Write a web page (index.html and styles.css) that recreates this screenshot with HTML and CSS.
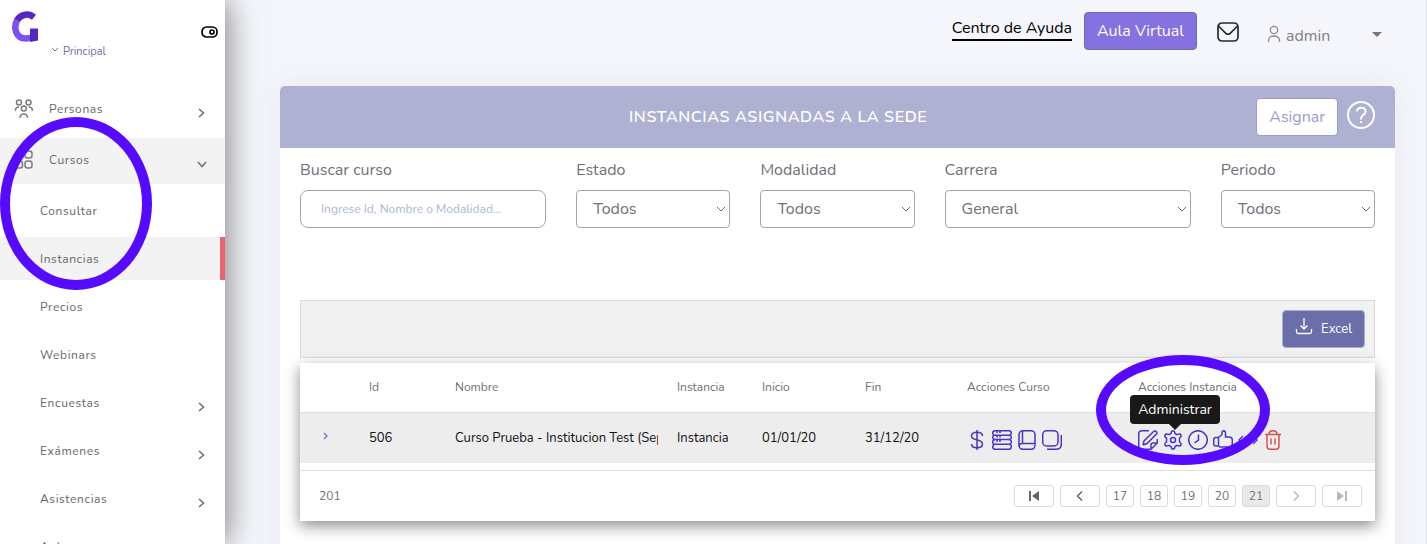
FILE: index.html
```html
<!DOCTYPE html>
<html lang="es">
  <head>
    <meta charset="UTF-8" />
    <meta name="viewport" content="width=device-width, initial-scale=1.0" />
    <title>Instancias asignadas a la sede</title>
    <link rel="stylesheet" href="styles.css">
  </head>
  <body>
    <div class="layout">
      <aside class="sidebar">
        <div class="brand">
          <svg class="logo" width="27" height="32" viewBox="0 0 27 32" fill="none" stroke-width="6.500">
            <path d="M5.500 8.500C1 16 3.500 27.500 14 27.500C17 27.500 19 27 21 25.500" stroke="#7a52f4" />
            <path d="M22 6.200C17 2.200 9 2.500 5.300 9" stroke="#5527c0" />
            <path d="M18 17.500H26V29.500L18 31Z" fill="#5527c0" stroke="none" />
          </svg>
          <a class="sede" href="#">
            <svg width="8" height="6" viewBox="0 0 8 6" fill="none" stroke="#6b6ea8"><path d="M1 1L4 4L7 1" /></svg>
            Principal
          </a>
          <button class="toggle" type="button" aria-label="Contraer menú">
            <svg width="18" height="12" viewBox="0 0 18 12" fill="none" stroke="#000" stroke-width="1.700">
              <rect x="1" y="1" width="15" height="10" rx="4.500" />
              <circle cx="11" cy="6" r="2" />
            </svg>
          </button>
        </div>

        <nav class="menu">
          <a class="menu-item" href="#">
            <svg class="menu-icon" width="20" height="20" viewBox="0 0 20 20" fill="none" stroke="#7d7d7d" stroke-width="1.500">
              <circle cx="5" cy="3.500" r="2.500" /><circle cx="14.500" cy="3.500" r="2.500" /><circle cx="9.800" cy="9.500" r="2.500" />
              <path d="M1.500 12V11C1.500 9 3 8 5 8M14.500 8C17 8 18.300 9 18.300 11V12M6 19C6 13.500 13.500 13.500 13.500 19" />
            </svg>
            <span>Personas</span>
            <svg class="arrow" width="7" height="10" viewBox="0 0 7 10"><path d="M1 1L5.500 5L1 9" /></svg>
          </a>
          <a class="menu-item open" href="#">
            <svg class="menu-icon" width="20" height="20" viewBox="0 0 20 20" fill="none" stroke="#7d7d7d" stroke-width="1.500">
              <rect x="1.500" y="1" width="7" height="7" rx="2.500" /><rect x="11" y="1" width="7" height="7" rx="2.500" />
              <rect x="1.500" y="11" width="7" height="7" rx="2.500" /><rect x="11" y="11" width="7" height="7" rx="2.500" />
            </svg>
            <span>Cursos</span>
            <svg class="arrow" width="10" height="7" viewBox="0 0 10 7"><path d="M1 1L5 5.500L9 1" /></svg>
          </a>
          <div class="submenu">
            <a class="sub-item" href="#"><span>Consultar</span></a>
            <a class="sub-item active" href="#"><span>Instancias</span></a>
            <a class="sub-item" href="#"><span>Precios</span></a>
            <a class="sub-item" href="#"><span>Webinars</span></a>
            <a class="sub-item" href="#"><span>Encuestas</span><svg class="arrow" width="7" height="10" viewBox="0 0 7 10"><path d="M1 1L5.500 5L1 9" /></svg></a>
            <a class="sub-item" href="#"><span>Exámenes</span><svg class="arrow" width="7" height="10" viewBox="0 0 7 10"><path d="M1 1L5.500 5L1 9" /></svg></a>
            <a class="sub-item" href="#"><span>Asistencias</span><svg class="arrow" width="7" height="10" viewBox="0 0 7 10"><path d="M1 1L5.500 5L1 9" /></svg></a>
            <a class="sub-item" href="#"><span>Aulas</span></a>
          </div>
        </nav>
      </aside>

      <main class="main">
        <header class="topbar">
          <a class="help-link" href="#">Centro de Ayuda</a>
          <button class="btn btn-aula" type="button">Aula Virtual</button>
          <a class="mail" href="#" aria-label="Mensajes">
            <svg width="22" height="20" viewBox="0 0 22 20" fill="none" stroke="#252b33" stroke-width="1.700">
              <rect x="1" y="1" width="20" height="18" rx="4" />
              <path d="M1.500 4L9 11.500Q11 13 13 11.500L20.500 4" />
            </svg>
          </a>
          <button class="user" type="button">
            <svg width="14" height="18" viewBox="0 0 14 18" fill="none" stroke="#8a8a8a" stroke-width="1.300">
              <circle cx="7" cy="5" r="3.700" /><path d="M1.500 17V15.500C1.500 9.500 12.500 9.500 12.500 15.500V17" />
            </svg>
            <span>admin</span>
            <i class="caret"></i>
          </button>
        </header>

        <section class="card">
          <div class="card-header">
            <h1>INSTANCIAS ASIGNADAS A LA SEDE</h1>
            <button class="btn btn-asignar" type="button">Asignar</button>
            <button class="help" type="button" aria-label="Ayuda">
              <svg width="28" height="28" viewBox="0 0 28 28" fill="none" stroke="#fff" stroke-width="2">
                <circle cx="14" cy="14" r="13" />
                <path d="M10 10.500C10 5.500 18.500 5.500 18.500 10.500C18.500 14 14 13.500 14 17.500V18.500M14 20V22" />
              </svg>
            </button>
          </div>

          <form class="filters">
            <div class="field wide">
              <label for="buscar">Buscar curso</label>
              <input id="buscar" type="text" placeholder="Ingrese Id, Nombre o Modalidad..." />
            </div>
            <div class="field">
              <label for="estado">Estado</label>
              <div class="select"><select id="estado"><option>Todos</option></select><svg width="10" height="6" viewBox="0 0 10 6"><path d="M1 1L5 5L9 1" /></svg></div>
            </div>
            <div class="field">
              <label for="modalidad">Modalidad</label>
              <div class="select"><select id="modalidad"><option>Todos</option></select><svg width="10" height="6" viewBox="0 0 10 6"><path d="M1 1L5 5L9 1" /></svg></div>
            </div>
            <div class="field wide">
              <label for="carrera">Carrera</label>
              <div class="select"><select id="carrera"><option>General</option></select><svg width="10" height="6" viewBox="0 0 10 6"><path d="M1 1L5 5L9 1" /></svg></div>
            </div>
            <div class="field">
              <label for="periodo">Periodo</label>
              <div class="select"><select id="periodo"><option>Todos</option></select><svg width="10" height="6" viewBox="0 0 10 6"><path d="M1 1L5 5L9 1" /></svg></div>
            </div>
          </form>

          <div class="toolbar">
            <button class="btn btn-excel" type="button">
              <svg width="18" height="18" viewBox="0 0 18 18" fill="none" stroke="#fff" stroke-width="1.300">
                <path d="M9 1V12M5.500 8.500L9 12L12.500 8.500M1.500 12V15Q1.500 16.500 3 16.500H15Q16.500 16.500 16.500 15V12" />
              </svg>
              Excel
            </button>
          </div>

          <div class="grid">
            <table>
              <colgroup>
                <col class="c-expand" /><col class="c-id" /><col class="c-nombre" /><col class="c-instancia" />
                <col class="c-inicio" /><col class="c-fin" /><col class="c-curso" /><col />
              </colgroup>
              <thead>
                <tr>
                  <th></th><th>Id</th><th>Nombre</th><th>Instancia</th><th>Inicio</th><th>Fin</th><th>Acciones Curso</th><th>Acciones Instancia</th>
                </tr>
              </thead>
              <tbody>
                <tr>
                  <td class="expand">
                    <button class="icon" type="button" aria-label="Expandir"><svg width="5" height="8" viewBox="0 0 5 8" fill="none" stroke="#6b6ec8" stroke-width="1.200"><path d="M1 1L4 4L1 7" /></svg></button>
                  </td>
                  <td>506</td>
                  <td><div class="clip">Curso Prueba - Institucion Test (Sep</div></td>
                  <td>Instancia</td>
                  <td>01/01/20</td>
                  <td>31/12/20</td>
                  <td>
                    <div class="actions">
                      <button class="icon" type="button" aria-label="Precios"><svg viewBox="0 0 20 20"><path d="M10 0V20M15.500 6C15.500 1 4.500 1 4.500 6C4.500 11 15.500 8.500 15.500 14C15.500 19 4.500 19 4.500 14" /></svg></button>
                      <button class="icon" type="button" aria-label="Contenidos"><svg viewBox="0 0 20 20"><path d="M3 5.300Q0.700 5.300 0.700 3Q0.700 0.700 3 0.700H17Q19.300 0.700 19.300 3Q19.300 5.300 17 5.300ZM3 5.300Q0.700 5.300 0.700 7.300Q0.700 9.600 3 9.600H17Q19.300 9.600 19.300 7.300Q19.300 5.300 17 5.300M3 9.600Q0.700 9.600 0.700 12Q0.700 14.300 3 14.300H17Q19.300 14.300 19.300 12Q19.300 9.600 17 9.600M3 14.300Q0.700 14.300 0.700 16.800Q0.700 19.300 3 19.300H17Q19.300 19.300 19.300 16.800Q19.300 14.300 17 14.300" /><path d="M5 1V3M8 1V3M5 5.500V7.500M8 5.500V7.500M5 10V12M8 10V12" /></svg></button>
                      <button class="icon" type="button" aria-label="Libro"><svg viewBox="0 0 20 20"><rect x="2" y="0.700" width="16" height="18.600" rx="4" /><path d="M5.500 1V13.500M2 16.500C2 14.500 3 13.500 5 13.500H18" /></svg></button>
                      <button class="icon" type="button" aria-label="Duplicar"><svg viewBox="0 0 20 20"><rect x="0.700" y="0.700" width="15.300" height="15.300" rx="4" /><path d="M19.300 5V14Q19.300 19.300 14 19.300H5" /></svg></button>
                    </div>
                  </td>
                  <td>
                    <div class="actions">
                      <button class="icon" type="button" aria-label="Editar"><svg viewBox="0 0 20 20"><path d="M11 0.800H4Q0.700 0.800 0.700 4V16Q0.700 19.300 4 19.300H13L19.300 13V9M13 19.300V15Q13 13 15 13H19.300M5 15L6 11L15.500 1.500Q18.500 0 19 3.500L9 13.500L5 15" /></svg></button>
                      <span class="tip-anchor">
                        <button class="icon" type="button" aria-describedby="tip" aria-label="Administrar"><svg viewBox="0 0 20 20"><path d="M8 3.500Q8.500 0.800 10 0.800Q11.500 0.800 12 3.500L14 4.600Q17 3.300 18 5Q18.700 6.500 16.500 8V12Q18.700 13.500 18 15Q17 16.700 14 15.400L12 16.500Q11.500 19.200 10 19.200Q8.500 19.200 8 16.500L6 15.400Q3 16.700 2 15Q1.300 13.500 3.500 12V8Q1.300 6.500 2 5Q3 3.300 6 4.600Z" /><circle cx="10" cy="10" r="2.500" /></svg></button>
                        <span class="tooltip" id="tip" role="tooltip">Administrar</span>
                      </span>
                      <button class="icon" type="button" aria-label="Horarios"><svg viewBox="0 0 20 20"><circle cx="10" cy="10" r="9.300" /><path d="M10.500 4.500V10L6.500 13" /></svg></button>
                      <button class="icon" type="button" aria-label="Aprobar"><svg viewBox="0 0 20 20"><path d="M5.500 16V7.500H2.700Q0.700 7.500 0.700 9.500V14Q0.700 16 2.700 16H5.500L7 17H16Q19.300 17 19.300 14V10Q19.300 7 16 7H12.500V3Q12.500 0.700 10.700 0.700Q9 0.700 9 3V4.500L5.500 7.500" /></svg></button>
                      <button class="icon" type="button" aria-label="Sincronizar"><svg viewBox="0 0 20 20"><path d="M5 6L1 10L5 14M15 6L19 10L15 14M4 10H16" /></svg></button>
                      <button class="icon danger" type="button" aria-label="Eliminar"><svg viewBox="0 0 20 20"><path d="M2 4.500H18M6 4.500Q6 0.700 10 0.700Q14 0.700 14 4.500M4 4.500V16Q4 19.300 7 19.300H13Q16 19.300 16 16V4.500M8 8.500V14.500M12 8.500V14.500" /></svg></button>
                    </div>
                  </td>
                </tr>
              </tbody>
            </table>
            <div class="grid-footer">
              <span>201</span>
              <div class="pager">
                <button class="nav" type="button" aria-label="Primera"><svg width="10" height="10" viewBox="0 0 10 10"><path d="M0 0H2V10H0ZM10 0V10L3 5Z" /></svg></button>
                <button class="nav" type="button" aria-label="Anterior"><svg width="10" height="10" viewBox="0 0 10 10"><path class="line" d="M7 0.500L2.500 5L7 9.500" /></svg></button>
                <button type="button">17</button>
                <button type="button">18</button>
                <button type="button">19</button>
                <button type="button">20</button>
                <button class="current" type="button">21</button>
                <button class="nav" type="button" disabled aria-label="Siguiente"><svg width="10" height="10" viewBox="0 0 10 10"><path class="line" d="M3 0.500L7.500 5L3 9.500" /></svg></button>
                <button class="nav" type="button" disabled aria-label="Última"><svg width="10" height="10" viewBox="0 0 10 10"><path d="M8 0H10V10H8ZM0 0V10L7 5Z" /></svg></button>
              </div>
            </div>
          </div>
        </section>
      </main>
    </div>

    <!-- marcas de la guía -->
    <div class="mark mark-menu"></div>
    <div class="mark mark-admin"></div>
  </body>
</html>
```
FILE: styles.css
```css
* {
  box-sizing: border-box;
}
body {
  margin: 0;
  font-family: Nunito, Lato, sans-serif;
  font-size: 16px;
  color: #707075;
  background: #f5f6fb;
}
a {
  color: inherit;
  text-decoration: none;
}
button,
input,
select {
  font-family: inherit;
}
button {
  cursor: pointer;
}
svg {
  display: block;
  flex: none;
}
.layout {
  display: flex;
  height: 100vh;
  overflow: hidden;
}

/* menú lateral */
.sidebar {
  flex: none;
  width: 225px;
  background: #fff;
  box-shadow: 0 0 32px rgba(0, 0, 0, 0.55);
  z-index: 1;
}
.brand {
  display: flex;
  align-items: flex-start;
  height: 87px;
  padding: 11px 6px 0 12px;
}
.sede {
  display: flex;
  align-items: center;
  gap: 4px;
  margin: 34px 0 0 12px;
  font-size: 11px;
  line-height: 14px;
  color: #6b6ea8;
}
.sede svg {
  margin-bottom: 4px;
}
.toggle {
  margin: 15px 0 0 auto;
  padding: 0;
  border: 0;
  background: none;
}
.menu-item,
.sub-item {
  display: flex;
  align-items: center;
  height: 46px;
  font-size: 12px;
  line-height: 16px;
  letter-spacing: 0.05em;
  color: #666;
}
.menu-item {
  gap: 15px;
  margin-bottom: 5px;
  padding: 0 18px 2px 14px;
}
.menu-item.open {
  background: #f3f3f3;
}
.arrow {
  margin: 8px 0 0 auto;
  fill: none;
  stroke: #707070;
  stroke-width: 1.5;
}
.menu-item svg.arrow[width="7"],
.sub-item .arrow {
  margin-right: 2px;
}
.sub-item {
  height: 43px;
  margin-bottom: 5px;
  padding: 0 18px 0 40px;
}
.sub-item.active {
  background: #f3f3f3;
  border-right: 5px solid #ee6270;
}

/* cabecera */
.main {
  flex: 1;
  min-width: 0;
  padding: 0 31px 0 55px;
  border-right: 1px solid #dfe1e8;
}
.topbar {
  display: flex;
  justify-content: flex-end;
  align-items: flex-start;
  height: 86px;
  padding: 12px 13px 0 0;
}
.help-link {
  margin: 5px 12px 0 0;
  border-bottom: 2px solid #000;
  line-height: 22px;
  color: #000;
}
.btn {
  height: 38px;
  padding: 0 12px;
  border: 1px solid #6b6ea8;
  border-radius: 4px;
  font-size: 16px;
  color: #fff;
}
.btn-aula {
  background: #8571df;
}
.mail {
  margin: 10px 28px 0 20px;
}
.user {
  display: flex;
  align-items: center;
  gap: 5px;
  width: 115px;
  margin-top: 12px;
  padding: 0;
  border: 0;
  background: none;
  font-size: 16px;
  line-height: 24px;
  color: #808080;
}
.user svg {
  margin-bottom: 5px;
}
.caret {
  margin: 0 0 3px auto;
  border: 5px solid transparent;
  border-top-color: #777;
  border-bottom: 0;
}

/* tarjeta */
.card {
  min-height: 500px;
  background: #fff;
  border-radius: 5px 5px 0 0;
  box-shadow: 0 0 30px rgba(80, 90, 120, 0.08);
}
.card-header {
  display: flex;
  align-items: center;
  height: 62px;
  padding: 0 20px;
  border-radius: 5px 5px 0 0;
  background: #afb1d2;
}
.card-header h1 {
  flex: 1;
  margin: 0;
  font-size: 16px;
  font-weight: 600;
  letter-spacing: 0.04em;
  text-align: center;
  color: #fff;
}
.btn-asignar {
  background: #fff;
  border-color: #9a9cd0;
  color: #9a9cc8;
}
.help {
  margin: 0 0 4px 9px;
  padding: 0;
  border: 0;
  background: none;
}
.filters {
  display: grid;
  grid-template-columns: repeat(12, 1fr);
  gap: 30px;
  padding: 11px 20px 0;
}
.field {
  grid-column: span 2;
}
.field.wide {
  grid-column: span 3;
}
.field label {
  display: block;
  margin-bottom: 9px;
  line-height: 22px;
}
.field input,
.field select {
  display: block;
  width: 100%;
  height: 38px;
  border: 1px solid #a3a3a8;
  border-radius: 4px;
  background: #fff;
  font-size: 16px;
  color: #707075;
}
.field input {
  padding: 0 20px;
  border-radius: 8px;
  font-size: 12px;
}
.field input::placeholder {
  color: #a8b8d6;
}
.select {
  position: relative;
}
.field select {
  appearance: none;
  padding: 0 16px;
}
.select svg {
  position: absolute;
  right: 4px;
  top: 16px;
  fill: none;
  stroke: #707075;
  pointer-events: none;
}
.toolbar {
  display: flex;
  justify-content: flex-end;
  align-items: center;
  height: 58px;
  margin: 72px 20px 5px;
  padding: 0 9px;
  border: 1px solid #dadada;
  background: #f1f1f1;
}
.btn-excel {
  display: flex;
  align-items: center;
  gap: 8px;
  border-color: #aaacd2;
  background: #6b6ea8;
  font-size: 13px;
}
.btn-excel svg {
  margin-bottom: 6px;
}

/* tabla */
.grid {
  margin: 0 20px;
  background: #fff;
  box-shadow: 0 5px 14px rgba(0, 0, 0, 0.45);
}
table {
  width: 100%;
  table-layout: fixed;
  border-collapse: collapse;
  font-size: 13px;
}
.c-expand {
  width: 52px;
}
.c-id {
  width: 86px;
}
.c-nombre {
  width: 222px;
}
.c-instancia {
  width: 85px;
}
.c-inicio {
  width: 103px;
}
.c-fin {
  width: 102px;
}
.c-curso {
  width: 171px;
}
th,
td {
  padding: 0 0 0 17px;
  text-align: left;
  white-space: nowrap;
}
th {
  height: 49px;
  border-bottom: 1px solid #dedede;
  font-size: 12px;
  font-weight: 400;
}
td {
  height: 51px;
  background: #ededed;
  color: #111;
}
.expand {
  padding-left: 23px;
}
.expand svg {
  margin-bottom: 4px;
}
.clip {
  margin-right: 2px;
  overflow: hidden;
}
.icon {
  display: block;
  padding: 0;
  border: 0;
  background: none;
}
.actions {
  display: flex;
  gap: 5px;
  padding-top: 4px;
}
.actions svg {
  width: 20px;
  height: 20px;
  fill: none;
  stroke: #4a34c8;
  stroke-width: 1.5;
}
.actions .danger svg {
  stroke: #dc4f4f;
}
.tip-anchor {
  position: relative;
}
.tooltip {
  position: absolute;
  left: -33px;
  bottom: 26px;
  width: 90px;
  border-radius: 4px;
  background: #191919;
  font-size: 14px;
  line-height: 29px;
  text-align: center;
  color: #fff;
}
.tooltip::after {
  content: "";
  position: absolute;
  left: 39px;
  top: 29px;
  border: 6px solid transparent;
  border-top-color: #191919;
  border-bottom: 0;
}
.grid-footer {
  display: flex;
  justify-content: space-between;
  align-items: center;
  height: 51px;
  margin-top: 7px;
  padding: 0 13px 0 19px;
  border-top: 1px solid #dedede;
  font-size: 12px;
}
.pager {
  display: flex;
  gap: 6px;
}
.pager button {
  display: flex;
  justify-content: center;
  align-items: center;
  width: 28px;
  height: 22px;
  padding: 0;
  border: 1px solid #dcdcdc;
  border-radius: 3px;
  background: #fff;
  font-size: 12px;
  color: #707075;
}
.pager .nav {
  width: 40px;
}
.pager .current {
  background: #e9e9e9;
}
.pager svg {
  fill: #666;
}
.pager .line {
  fill: none;
  stroke: #666;
  stroke-width: 1.5;
}
.pager :disabled svg {
  opacity: 0.45;
}

.mark {
  position: absolute;
  border: 10px solid #560bff;
  border-radius: 50%;
  pointer-events: none;
  z-index: 2;
}
.mark-menu {
  left: 0;
  top: 117px;
  width: 152px;
  height: 173px;
}
.mark-admin {
  right: 157px;
  top: 355px;
  width: 174px;
  height: 110px;
}
```
